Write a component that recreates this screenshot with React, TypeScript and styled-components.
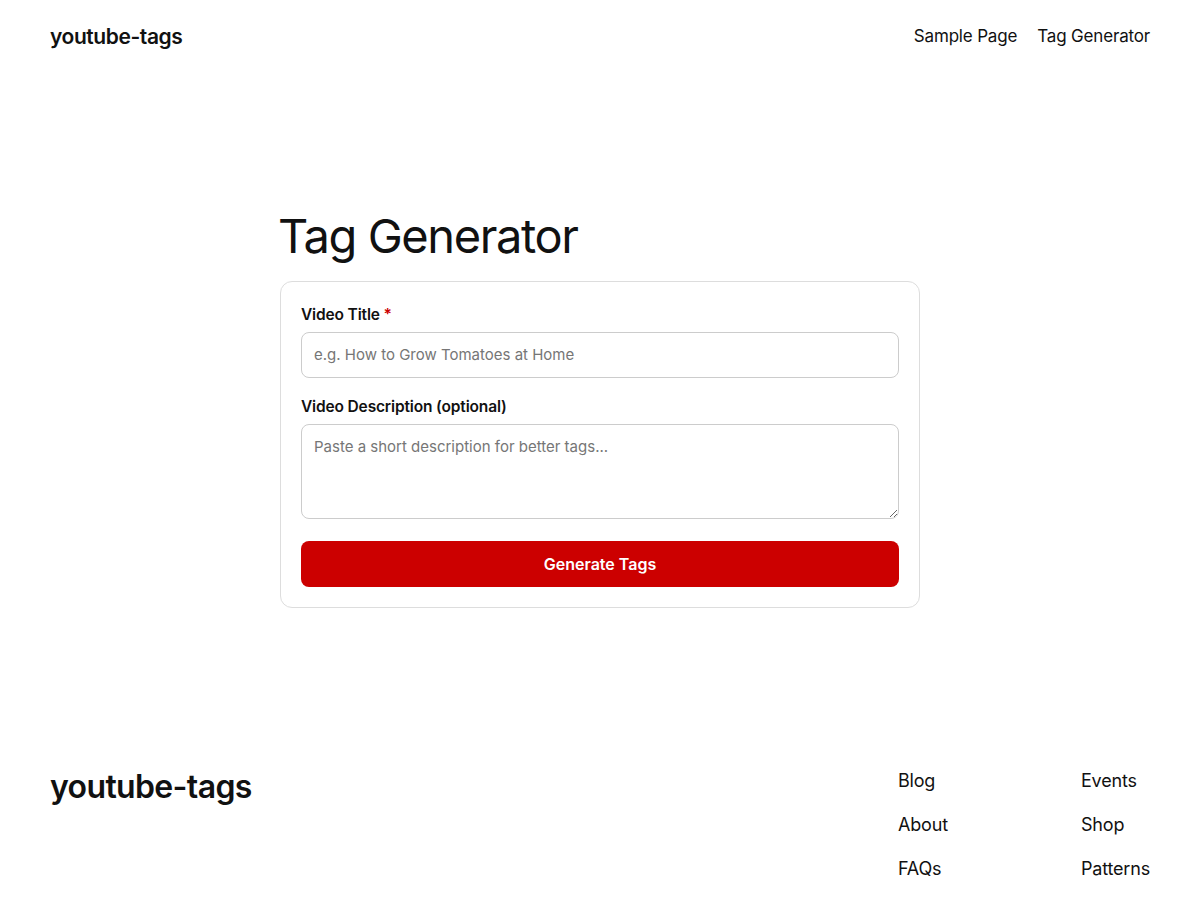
import React from 'react';
import styled, { createGlobalStyle } from 'styled-components';

const GlobalStyle = createGlobalStyle`
  html, body {
    margin: 0;
    padding: 0;
    background: #ffffff;
  }
  body {
    font-family: Inter, "Noto Sans", "Liberation Sans", sans-serif;
    color: #111111;
    -webkit-font-smoothing: antialiased;
  }
  * {
    box-sizing: border-box;
  }
`;

const Page = styled.div`
  min-height: 900px;
  display: flex;
  flex-direction: column;
`;

const Header = styled.header`
  display: flex;
  align-items: center;
  justify-content: space-between;
  padding: 14px 50px 0;
  height: 58px;
`;

const Logo = styled.a<{ $size: number }>`
  font-size: ${(p) => p.$size}px;
  font-weight: 600;
  letter-spacing: -0.02em;
  color: #111111;
  text-decoration: none;
`;

const Nav = styled.nav`
  display: flex;
  gap: 20px;
`;

const NavLink = styled.a`
  font-size: 17px;
  color: #111111;
  text-decoration: none;
  letter-spacing: -0.01em;
`;

const Main = styled.main`
  width: 640px;
  margin: 152px auto 0;
`;

const Title = styled.h1`
  margin: 0 0 19px -2px;
  font-size: 47px;
  font-weight: 400;
  letter-spacing: -0.03em;
  line-height: 1.1;
`;

const Card = styled.form`
  border: 1px solid #dddddd;
  border-radius: 12px;
  padding: 22px 20px 20px;
  display: flex;
  flex-direction: column;
`;

const Label = styled.label`
  font-size: 15.5px;
  font-weight: 600;
  line-height: 22px;
  margin: 0 0 6px;
  letter-spacing: -0.01em;
`;

const Required = styled.span`
  color: #cc0000;
`;

const Field = styled.div`
  display: flex;
  flex-direction: column;
  margin-bottom: 18px;
`;

const Input = styled.input`
  height: 46px;
  padding: 0 12px;
  border: 1px solid #cccccc;
  border-radius: 8px;
  font-family: inherit;
  font-size: 15px;
  color: #111111;
  &::placeholder {
    color: #767676;
  }
`;

const TextArea = styled.textarea`
  height: 95px;
  padding: 12px 12px;
  border: 1px solid #cccccc;
  border-radius: 8px;
  font-family: inherit;
  font-size: 15px;
  color: #111111;
  resize: vertical;
  &::placeholder {
    color: #767676;
  }
`;

const Button = styled.button`
  height: 46px;
  margin-top: 4px;
  border: none;
  border-radius: 8px;
  background: #cc0000;
  color: #ffffff;
  font-family: inherit;
  font-size: 16px;
  font-weight: 600;
  cursor: pointer;
`;

const Footer = styled.footer`
  margin-top: auto;
  display: flex;
  justify-content: space-between;
  padding: 0 50px 20px;
`;

const FooterLinks = styled.div`
  display: grid;
  grid-template-columns: 183px auto;
  row-gap: 22px;
  padding-top: 3px;
`;

const FooterLink = styled.a`
  font-size: 18px;
  line-height: 22px;
  color: #111111;
  text-decoration: none;
  letter-spacing: -0.01em;
`;

const App = () => {
  return (
    <Page>
      <GlobalStyle />
      <Header>
        <Logo href="#" $size={21}>youtube-tags</Logo>
        <Nav>
          <NavLink href="#">Sample Page</NavLink>
          <NavLink href="#">Tag Generator</NavLink>
        </Nav>
      </Header>
      <Main>
        <Title>Tag Generator</Title>
        <Card onSubmit={(e) => e.preventDefault()}>
          <Field>
            <Label>
              Video Title <Required>*</Required>
            </Label>
            <Input placeholder="e.g. How to Grow Tomatoes at Home" />
          </Field>
          <Field>
            <Label>Video Description (optional)</Label>
            <TextArea placeholder="Paste a short description for better tags..." />
          </Field>
          <Button type="submit">Generate Tags</Button>
        </Card>
      </Main>
      <Footer>
        <Logo href="#" $size={32}>youtube-tags</Logo>
        <FooterLinks>
          <FooterLink href="#">Blog</FooterLink>
          <FooterLink href="#">Events</FooterLink>
          <FooterLink href="#">About</FooterLink>
          <FooterLink href="#">Shop</FooterLink>
          <FooterLink href="#">FAQs</FooterLink>
          <FooterLink href="#">Patterns</FooterLink>
        </FooterLinks>
      </Footer>
    </Page>
  );
};

export default App;
